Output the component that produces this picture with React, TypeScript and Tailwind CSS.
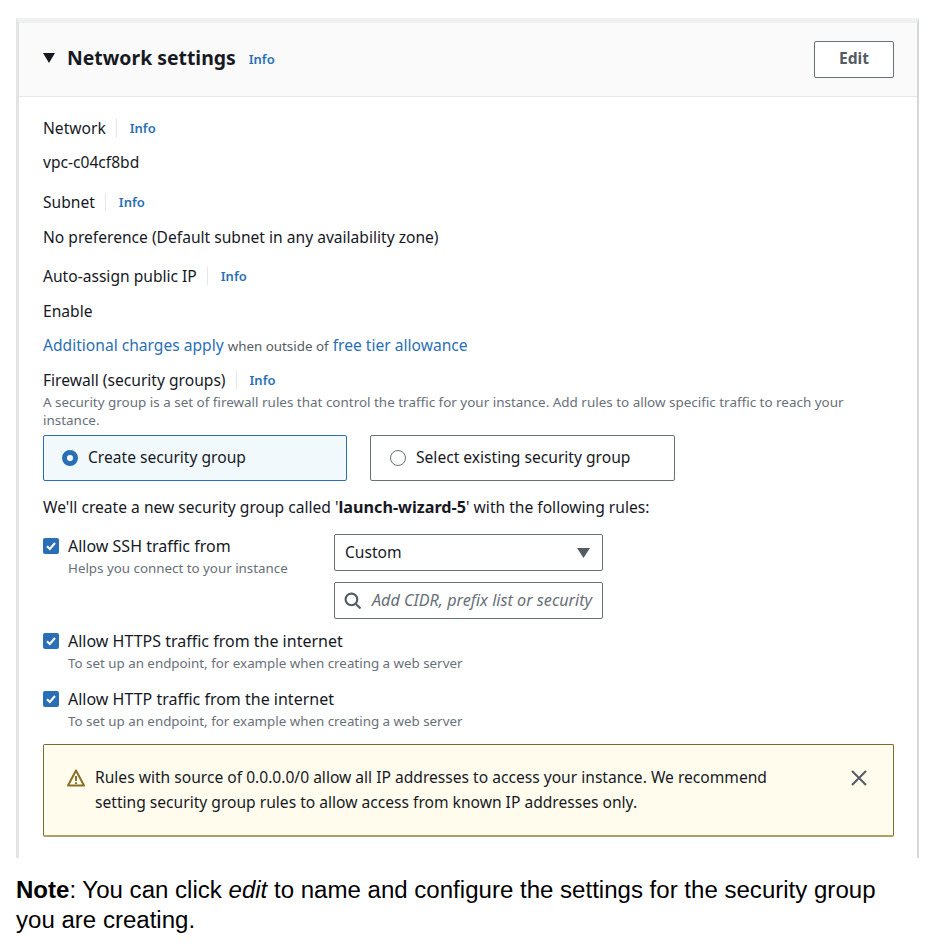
import React from "react";

const Info = ({ className = "" }: { className?: string }) => (
  <span className={`text-[13px] font-semibold text-[#2a6fb5] ${className}`}>Info</span>
);

const Label = ({ children }: { children: React.ReactNode }) => (
  <div className="flex items-center h-[24px] text-[#16191f]">
    <span className="mt-[2px]">{children}</span>
    <span className="ml-[10px] mr-[13px] w-px h-[18px] bg-[#e4e6e7]" />
    <Info className="mt-[2px]" />
  </div>
);

const Check = () => (
  <span className="w-[16px] h-[16px] rounded-[2px] bg-[#2a6fb5] flex items-center justify-center shrink-0">
    <svg width="12" height="12" viewBox="0 0 12 12" fill="none">
      <path d="M2 6.2 L4.8 9 L10 3" stroke="white" strokeWidth="2" />
    </svg>
  </span>
);

const CheckRow = ({ title, help }: { title: string; help: string }) => (
  <div className="flex gap-[9px]">
    <div className="h-[24px] flex items-center"><Check /></div>
    <div>
      <div className="h-[24px] leading-[24px] text-[16px] text-[#16191f]">{title}</div>
      <div className="h-[20px] leading-[20px] text-[13.35px] text-[#687078]">{help}</div>
    </div>
  </div>
);

export default function App() {
  return (
    <div className="w-[950px] h-[952px] bg-white overflow-hidden font-['Noto_Sans','Open_Sans',sans-serif] text-[15.6px] text-[#16191f]">
      <div className="h-[18px]" />
      <div className="ml-[16px] w-[903px] h-[840px] border-t-[5px] border-t-[#eff0f0] border-l-[3px] border-l-[#e3e5e5] border-r-2 border-r-[#d5d8d8]">
        <div className="h-[74px] bg-[#fafafa] border-b border-[#e4e6e7] flex items-center pl-[24px] pr-[23px]">
          <svg width="12" height="10" viewBox="0 0 12 10" className="mr-[12px] mb-[4px]"><path d="M0 0H12L6 10Z" fill="#16191f" /></svg>
          <span className="text-[19.4px] font-bold mb-[4px]">Network settings</span>
          <Info className="ml-[13px]" />
          <div className="ml-auto -mt-[1px] w-[80px] h-[37px] border border-[#687078] rounded-[2px] bg-white flex items-center justify-center text-[15.6px] font-bold text-[#545b64]">Edit</div>
        </div>
        <div className="pl-[24px] pr-[23px] pt-[19px]">
          <Label>Network</Label>
          <div className="h-[24px] leading-[24px] mt-[10px]">vpc-c04cf8bd</div>
          <div className="mt-[16px]"><Label>Subnet</Label></div>
          <div className="h-[24px] leading-[24px] mt-[11px]">No preference (Default subnet in any availability zone)</div>
          <div className="mt-[15px]"><Label>Auto-assign public IP</Label></div>
          <div className="h-[24px] leading-[24px] mt-[11px]">Enable</div>
          <div className="h-[24px] leading-[24px] mt-[10px]">
            <span className="text-[#2a6fb5]">Additional charges apply</span>{" "}
            <span className="text-[13.35px] text-[#545b64]">when outside of</span>{" "}
            <span className="text-[#2a6fb5]">free tier allowance</span>
          </div>
          <div className="mt-[11px]"><Label>Firewall (security groups)</Label></div>
          <div className="text-[13.45px] leading-[18px] text-[#687078] mt-[1px]">A security group is a set of firewall rules that control the traffic for your instance. Add rules to allow specific traffic to reach your instance.</div>
          <div className="flex gap-[23px] mt-[6px]">
            <div className="w-[304px] h-[46px] border border-[#2a6fb5] rounded-[2px] bg-[#f2f9fd] flex items-center pl-[18px] gap-[10px]">
              <span className="w-[16px] h-[16px] rounded-full border-[5px] border-[#2a6fb5] bg-white" />
              <span>Create security group</span>
            </div>
            <div className="w-[305px] h-[46px] border border-[#687078] rounded-[2px] flex items-center pl-[19px] gap-[10px]">
              <span className="w-[16px] h-[16px] rounded-full border border-[#687078] bg-white" />
              <span>Select existing security group</span>
            </div>
          </div>
          <div className="h-[24px] leading-[24px] mt-[14px]">We'll create a new security group called '<b className="text-[16.2px]">launch-wizard-5</b>' with the following rules:</div>
          <div className="flex mt-[15px]">
            <div className="w-[291px]"><CheckRow title="Allow SSH traffic from" help="Helps you connect to your instance" /></div>
            <div className="flex flex-col gap-[11px] w-[269px]">
              <div className="h-[37px] border border-[#687078] rounded-[2px] flex items-center pl-[10px] pr-[12px] justify-between">
                <span>Custom</span>
                <svg width="13" height="10" viewBox="0 0 13 10"><path d="M0 0H13L6.5 10Z" fill="#545b64" /></svg>
              </div>
              <div className="h-[37px] border border-[#687078] rounded-[2px] flex items-center pl-[9px]">
                <svg width="17" height="17" viewBox="0 0 16 16" fill="none" stroke="#545b64" strokeWidth="2" className="mr-[11px] shrink-0">
                  <circle cx="7" cy="7" r="5.5" />
                  <path d="M11 11L15.5 15.5" />
                </svg>
                <span className="italic text-[16.2px] text-[#687078] whitespace-nowrap">Add CIDR, prefix list or security</span>
              </div>
            </div>
          </div>
          <div className="mt-[10px]"><CheckRow title="Allow HTTPS traffic from the internet" help="To set up an endpoint, for example when creating a web server" /></div>
          <div className="mt-[14px]"><CheckRow title="Allow HTTP traffic from the internet" help="To set up an endpoint, for example when creating a web server" /></div>
          <div className="mt-[13px] h-[93px] border border-[#7d6a2e] border-b-[#b0a160] border-b-2 rounded-[2px] bg-[#fffcee] flex pl-[22px] pr-[26px] pt-[20px]">
            <svg width="20" height="20" viewBox="0 0 20 20" fill="none" className="shrink-0 mr-[9px] mt-[3px]">
              <path d="M10 2.5L18 17.5H2Z" stroke="#8c6e26" strokeWidth="2" strokeLinejoin="round" />
              <path d="M10 8V13M10 14.2V16" stroke="#8c6e26" strokeWidth="2" />
            </svg>
            <div className="leading-[25px] w-[700px]">Rules with source of 0.0.0.0/0 allow all IP addresses to access your instance. We recommend setting security group rules to allow access from known IP addresses only.</div>
            <svg width="16" height="16" viewBox="0 0 16 16" className="ml-auto mt-[5px]" stroke="#545b64" strokeWidth="2"><path d="M1 1L15 15M15 1L1 15" /></svg>
          </div>
        </div>
      </div>
      <div className="ml-[16px] mt-[17px] w-[880px] font-['Liberation_Sans',sans-serif] text-[24.05px] leading-[30px] text-black">
        <b>Note</b>: You can click <i>edit</i> to name and configure the settings for the security group you are creating.
      </div>
    </div>
  );
}
